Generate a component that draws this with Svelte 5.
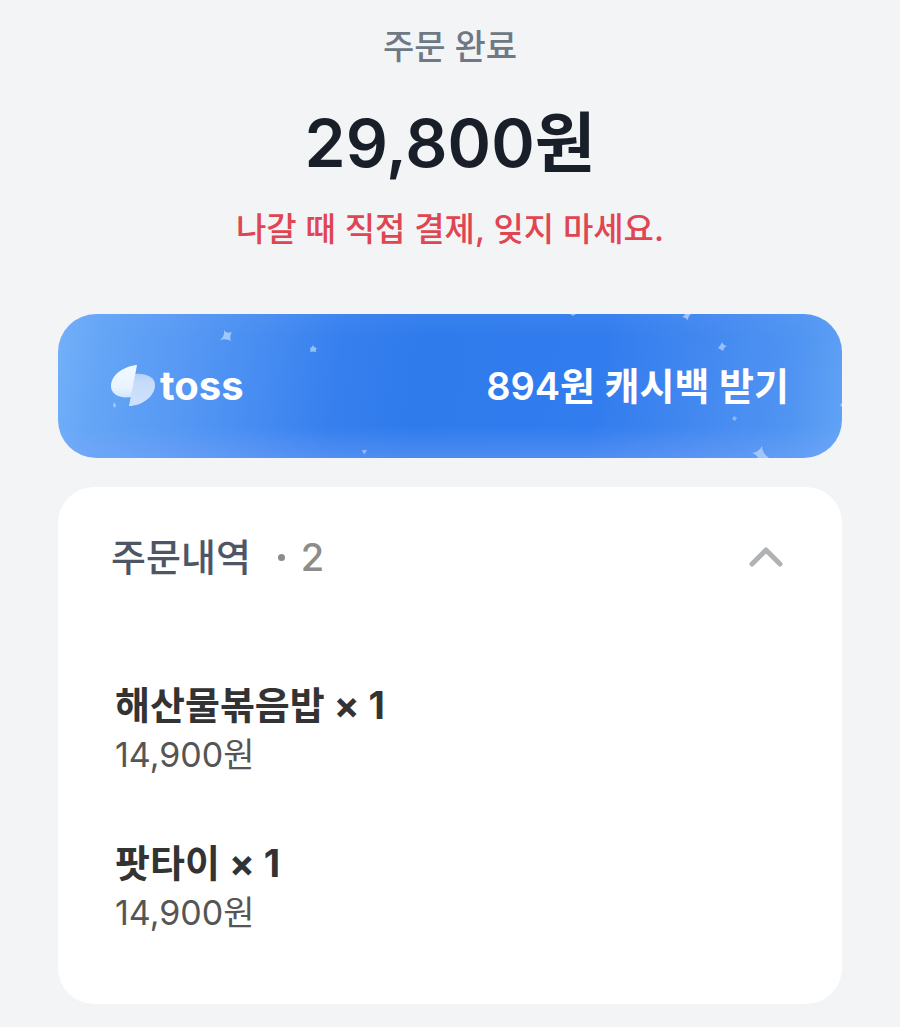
<script lang="ts">
  interface OrderItem {
    name:  string
    count: number
    price: number
  }

  const items: OrderItem[] = [
    { name: '해산물볶음밥', count: 1, price: 14900 },
    { name: '팟타이', count: 1, price: 14900 },
  ]

  const cashback = 894

  let open = $state(true)
  const total = $derived(items.reduce((sum, item) => sum + item.price * item.count, 0))

  const won = (n: number) => `${n.toLocaleString('en-US')}원`
</script>

<main class="page">
  <header class="summary">
    <h1 class="status">주문 완료</h1>
    <p class="total">{won(total)}</p>
    <p class="notice">나갈 때 직접 결제, 잊지 마세요.</p>
  </header>

  <button class="banner" type="button">
    <svg class="sparkles" viewBox="0 0 784 144" preserveAspectRatio="none" aria-hidden="true">
      <path d="M166 16Q168 20 174 18Q171 22 173 27Q168 24 162 26Q167 22 166 16Z" fill="#a0c8fa" />
      <path d="M255 31Q256 34 259 34Q257 36 258 38Q255 37 252 38Q253 36 252 34Q254 34 255 31Z" fill="#94c0fa" />
      <path d="M56 88l2 3-1 3-2-2z" fill="#9cccfb" />
      <path d="M304 136l5 0-2 4-2-1z" fill="#8cbcf8" />
      <path d="M512 0h6l-3 2z" fill="#8fbcf8" />
      <path d="M624 3Q627 2 627 0H633Q630 2 630 6Q627 3 624 3Z" fill="#a0c5f9" />
      <path d="M664 28Q665 31 669 32Q666 33 665 37Q662 35 660 34Q663 31 664 28Z" fill="#96bff9" />
      <path d="M676 102l3 2-2 3-3-2z" fill="#88b8f8" />
      <path d="M704 132Q704 139 711 144H700Q699 141 694 139Q701 138 704 132Z" fill="#a0c6fa" />
      <path d="M784 89v4l-2-2z" fill="#a6cefb" />
    </svg>
    <span class="brand">
      <svg class="logo" viewBox="0 0 44 42" aria-hidden="true">
        <defs>
          <linearGradient id="leaf" x1="0" y1="0" x2="0" y2="1">
            <stop offset="0" stop-color="#f1f9ff" />
            <stop offset="0.7" stop-color="#e8f4ff" />
            <stop offset="1" stop-color="#d0e6fd" />
          </linearGradient>
          <linearGradient id="petal" x1="0" y1="0" x2="0" y2="1">
            <stop offset="0" stop-color="#b4d1f8" />
            <stop offset="0.3" stop-color="#c7dcfa" />
            <stop offset="1" stop-color="#cce2fd" />
          </linearGradient>
        </defs>
        <path d="M24 9C35 8 44 12 44 20C44 32 30 41 18 41Z" fill="url(#petal)" />
        <path d="M26 0L20 32C8 34 0 29 0 21C0 9 14 1 26 0Z" fill="url(#leaf)" />
      </svg>
      <span class="wordmark">toss</span>
    </span>
    <span class="cta">{won(cashback)} 캐시백 받기</span>
  </button>

  <section class="card">
    <h2 class="card-head">
      <button class="toggle" type="button" aria-expanded={open} onclick={() => (open = !open)}>
        <span class="label">주문내역</span>
        <span class="dot"></span>
        <span class="count">{items.length}</span>
        <svg class="chevron" class:closed={!open} viewBox="0 0 34 22" aria-hidden="true">
          <path d="M3 18L17 4L31 18" />
        </svg>
      </button>
    </h2>

    {#if open}
      <ul class="items">
        {#each items as item}
          <li>
            <p class="name">{item.name} × {item.count}</p>
            <p class="price">{won(item.price)}</p>
          </li>
        {/each}
      </ul>
    {/if}
  </section>
</main>

<style>
  :global(body) {
    margin: 0;
    background: #f2f4f6;
  }

  .page {
    padding: 23px 58px;
    font-family: Inter, 'Noto Sans CJK KR', sans-serif;
  }

  h1, h2, p, ul { margin: 0; padding: 0; }

  button {
    border: 0;
    padding: 0;
    background: none;
    font: inherit;
    color: inherit;
    cursor: pointer;
  }

  .summary {
    display: flex;
    flex-direction: column;
    align-items: center;
    text-align: center;
  }

  .status {
    color: #6f7885;
    font-size: 34px;
    font-weight: 500;
    line-height: 48px;
  }

  .total {
    margin-top: 28px;
    color: #191f28;
    font-size: 66px;
    font-weight: 600;
    line-height: 88px;
  }

  .notice {
    margin-top: 18px;
    color: #e04552;
    font-size: 33px;
    font-weight: 500;
    line-height: 48px;
  }

  .banner {
    position: relative;
    display: flex;
    align-items: center;
    justify-content: space-between;
    width: 100%;
    height: 144px;
    margin-top: 61px;
    padding: 0 53px;
    border-radius: 38px;
    overflow: hidden;
    color: #fff;
    background:
      linear-gradient(to bottom, rgba(120, 170, 250, 0.12), transparent 16%, transparent 78%, rgba(130, 170, 250, 0.36)),
      linear-gradient(98deg, #73b0f9 0%, #64a5f6 6%, #5799f4 16%, #458bf1 27%, #367fee 36%, #2f7bec 46%, #317cee 68%, #4489f0 82%, #5095f2 93%, #62a3f5 100%);
  }

  .sparkles {
    position: absolute;
    inset: 0;
    width: 100%;
    height: 100%;
  }

  .brand {
    position: relative;
    display: flex;
    align-items: center;
    gap: 5px;
  }

  .logo {
    width: 44px;
    height: 42px;
  }

  .wordmark {
    font-size: 40px;
    font-weight: 700;
    line-height: 48px;
  }

  .cta {
    position: relative;
    font-size: 38px;
    font-weight: 600;
    line-height: 48px;
  }

  .card {
    margin-top: 29px;
    padding: 44px 53px 67px;
    border-radius: 36px;
    background: #fff;
  }

  .toggle {
    display: flex;
    align-items: center;
    width: 100%;
    font-size: 38px;
    line-height: 52px;
  }

  .label {
    color: #4e5666;
    font-weight: 500;
  }

  .dot {
    width: 7px;
    height: 7px;
    margin: 0 16px 0 27px;
    border-radius: 50%;
    background: #8c8c8c;
  }

  .count {
    color: #8c8c8c;
    font-weight: 500;
  }

  .chevron {
    width: 34px;
    height: 22px;
    margin-left: auto;
    margin-right: 6px;
    fill: none;
    stroke: #b0b3b6;
    stroke-width: 5;
    stroke-linecap: round;
    stroke-linejoin: round;
  }

  .chevron.closed { transform: rotate(180deg); }

  .items {
    display: flex;
    flex-direction: column;
    gap: 58px;
    margin-top: 96px;
    padding-left: 4px;
    list-style: none;
  }

  .name {
    color: #333;
    font-size: 38px;
    font-weight: 700;
    line-height: 52px;
  }

  .price {
    color: #555;
    font-size: 34px;
    font-weight: 400;
    line-height: 48px;
  }
</style>
